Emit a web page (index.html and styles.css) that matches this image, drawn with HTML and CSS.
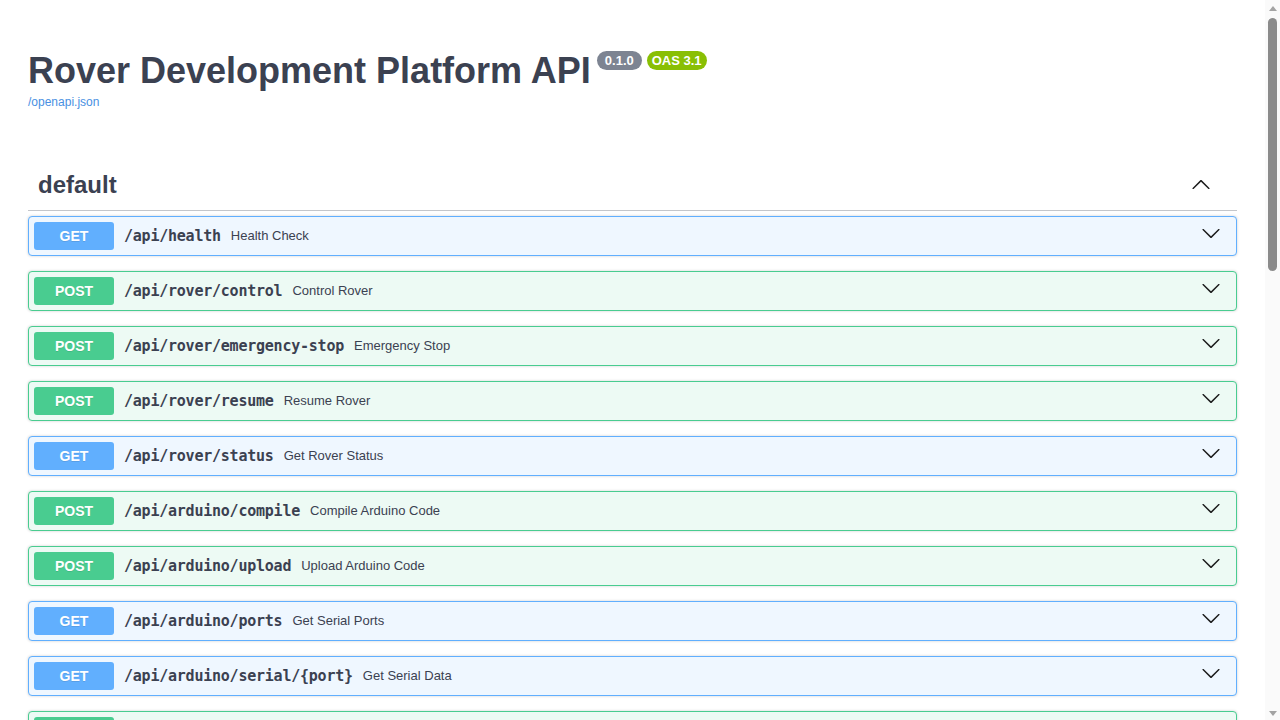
FILE: index.html
```html
<!DOCTYPE html>
<html lang="en">
<head>
<meta charset="utf-8">
<title>Rover Development Platform API - Swagger UI</title>
<link rel="stylesheet" href="styles.css">
</head>
<body>
<div class="page">
  <div class="info">
    <h2 class="title"><span class="title-text">Rover Development Platform API</span><span class="badges"><span class="badge version">0.1.0</span><span class="badge oas">OAS 3.1</span></span></h2>
    <a class="spec-link" href="#">/openapi.json</a>
  </div>

  <section class="tag-section">
    <h3 class="tag">
      <span class="tag-name">default</span>
      <span class="expand"><svg width="20" height="20" viewBox="0 0 20 20"><path transform="rotate(180 10 10)" d="M17.418 6.109c.272-.268.709-.268.979 0s.271.701 0 .969l-7.908 7.83c-.27.268-.707.268-.979 0l-7.908-7.83c-.27-.268-.27-.701 0-.969.271-.268.709-.268.979 0L10 13.25l7.418-7.141z"/></svg></span>
    </h3>

    <div class="opblock get">
      <span class="method">GET</span><span class="path">/api/health</span><span class="desc">Health Check</span>
      <svg class="arrow" width="20" height="20" viewBox="0 0 20 20"><path d="M17.418 6.109c.272-.268.709-.268.979 0s.271.701 0 .969l-7.908 7.83c-.27.268-.707.268-.979 0l-7.908-7.83c-.27-.268-.27-.701 0-.969.271-.268.709-.268.979 0L10 13.25l7.418-7.141z"/></svg>
    </div>
    <div class="opblock post">
      <span class="method">POST</span><span class="path">/api/rover/control</span><span class="desc">Control Rover</span>
      <svg class="arrow" width="20" height="20" viewBox="0 0 20 20"><path d="M17.418 6.109c.272-.268.709-.268.979 0s.271.701 0 .969l-7.908 7.83c-.27.268-.707.268-.979 0l-7.908-7.83c-.27-.268-.27-.701 0-.969.271-.268.709-.268.979 0L10 13.25l7.418-7.141z"/></svg>
    </div>
    <div class="opblock post">
      <span class="method">POST</span><span class="path">/api/rover/emergency-stop</span><span class="desc">Emergency Stop</span>
      <svg class="arrow" width="20" height="20" viewBox="0 0 20 20"><path d="M17.418 6.109c.272-.268.709-.268.979 0s.271.701 0 .969l-7.908 7.83c-.27.268-.707.268-.979 0l-7.908-7.83c-.27-.268-.27-.701 0-.969.271-.268.709-.268.979 0L10 13.25l7.418-7.141z"/></svg>
    </div>
    <div class="opblock post">
      <span class="method">POST</span><span class="path">/api/rover/resume</span><span class="desc">Resume Rover</span>
      <svg class="arrow" width="20" height="20" viewBox="0 0 20 20"><path d="M17.418 6.109c.272-.268.709-.268.979 0s.271.701 0 .969l-7.908 7.83c-.27.268-.707.268-.979 0l-7.908-7.83c-.27-.268-.27-.701 0-.969.271-.268.709-.268.979 0L10 13.25l7.418-7.141z"/></svg>
    </div>
    <div class="opblock get">
      <span class="method">GET</span><span class="path">/api/rover/status</span><span class="desc">Get Rover Status</span>
      <svg class="arrow" width="20" height="20" viewBox="0 0 20 20"><path d="M17.418 6.109c.272-.268.709-.268.979 0s.271.701 0 .969l-7.908 7.83c-.27.268-.707.268-.979 0l-7.908-7.83c-.27-.268-.27-.701 0-.969.271-.268.709-.268.979 0L10 13.25l7.418-7.141z"/></svg>
    </div>
    <div class="opblock post">
      <span class="method">POST</span><span class="path">/api/arduino/compile</span><span class="desc">Compile Arduino Code</span>
      <svg class="arrow" width="20" height="20" viewBox="0 0 20 20"><path d="M17.418 6.109c.272-.268.709-.268.979 0s.271.701 0 .969l-7.908 7.83c-.27.268-.707.268-.979 0l-7.908-7.83c-.27-.268-.27-.701 0-.969.271-.268.709-.268.979 0L10 13.25l7.418-7.141z"/></svg>
    </div>
    <div class="opblock post">
      <span class="method">POST</span><span class="path">/api/arduino/upload</span><span class="desc">Upload Arduino Code</span>
      <svg class="arrow" width="20" height="20" viewBox="0 0 20 20"><path d="M17.418 6.109c.272-.268.709-.268.979 0s.271.701 0 .969l-7.908 7.83c-.27.268-.707.268-.979 0l-7.908-7.83c-.27-.268-.27-.701 0-.969.271-.268.709-.268.979 0L10 13.25l7.418-7.141z"/></svg>
    </div>
    <div class="opblock get">
      <span class="method">GET</span><span class="path">/api/arduino/ports</span><span class="desc">Get Serial Ports</span>
      <svg class="arrow" width="20" height="20" viewBox="0 0 20 20"><path d="M17.418 6.109c.272-.268.709-.268.979 0s.271.701 0 .969l-7.908 7.83c-.27.268-.707.268-.979 0l-7.908-7.83c-.27-.268-.27-.701 0-.969.271-.268.709-.268.979 0L10 13.25l7.418-7.141z"/></svg>
    </div>
    <div class="opblock get">
      <span class="method">GET</span><span class="path">/api/arduino/serial/{port}</span><span class="desc">Get Serial Data</span>
      <svg class="arrow" width="20" height="20" viewBox="0 0 20 20"><path d="M17.418 6.109c.272-.268.709-.268.979 0s.271.701 0 .969l-7.908 7.83c-.27.268-.707.268-.979 0l-7.908-7.83c-.27-.268-.27-.701 0-.969.271-.268.709-.268.979 0L10 13.25l7.418-7.141z"/></svg>
    </div>
    <div class="opblock post">
      <span class="method">POST</span><span class="path">/api/arduino/serial/{port}</span><span class="desc">Send Serial Data</span>
      <svg class="arrow" width="20" height="20" viewBox="0 0 20 20"><path d="M17.418 6.109c.272-.268.709-.268.979 0s.271.701 0 .969l-7.908 7.83c-.27.268-.707.268-.979 0l-7.908-7.83c-.27-.268-.27-.701 0-.969.271-.268.709-.268.979 0L10 13.25l7.418-7.141z"/></svg>
    </div>
  </section>
</div>
<div class="scrollbar">
  <span class="sb-up"></span>
  <span class="sb-thumb"></span>
  <span class="sb-down"></span>
</div>
</body>
</html>
```
FILE: styles.css
```css
* { box-sizing: border-box; }

html, body {
  margin: 0;
  height: 720px;
  overflow: hidden;
  background: #fff;
}

body {
  display: flex;
  font-family: "Liberation Sans", Arial, sans-serif;
  color: #3b4151;
}

.page {
  flex: 1;
  min-width: 0;
  padding: 50px 28px 0;
}

/* Info header */
.info {
  margin-bottom: 53px;
}

.title {
  margin: 0;
  display: flex;
  align-items: flex-start;
  font-size: 36px;
  line-height: 41px;
  font-weight: bold;
  color: #3b4151;
}

.badges {
  display: flex;
  gap: 5px;
  margin-left: 6px;
  margin-top: 1px;
}

.badge {
  font-size: 13px;
  line-height: 15px;
  font-weight: bold;
  color: #fff;
  border-radius: 57px;
  padding: 2px 8px;
}

.badge.version { background: #7d8492; }
.badge.oas { background: #89bf04; padding: 2px 5px; }

.spec-link {
  display: block;
  margin-top: 4px;
  font-size: 12px;
  line-height: 14px;
  color: #4990e2;
  text-decoration: none;
}

/* Tag header */
.tag {
  margin: 0 0 5px;
  display: flex;
  align-items: center;
  padding: 9px 20px 11px 10px;
  font-size: 24px;
  line-height: 28px;
  font-weight: bold;
  border-bottom: 1px solid rgba(59, 65, 81, 0.3);
}

.tag-name { flex: 1; }

.expand {
  display: flex;
  margin-right: 6px;
  margin-bottom: 1px;
}

.expand svg, .arrow { fill: #1b1b1b; }

/* Operation blocks */
.opblock {
  display: flex;
  align-items: center;
  padding: 5px;
  margin-bottom: 15px;
  border: 1px solid;
  border-radius: 4px;
  box-shadow: 0 0 3px rgba(0, 0, 0, 0.19);
}

.opblock.get { border-color: #61affe; background: #eff7ff; }
.opblock.post { border-color: #49cc90; background: #edfaf4; }

.method {
  min-width: 80px;
  padding: 6px 0;
  text-align: center;
  font-size: 14px;
  line-height: 16px;
  font-weight: bold;
  color: #fff;
  border-radius: 3px;
  text-shadow: 0 1px 0 rgba(0, 0, 0, 0.1);
}

.get .method { background: #61affe; }
.post .method { background: #49cc90; }

.path {
  padding: 0 10px;
  font-family: "DejaVu Sans Mono", "Liberation Mono", monospace;
  font-size: 15px;
  letter-spacing: -0.23px;
  font-weight: bold;
  color: #3b4151;
}

.desc {
  flex: 1;
  font-size: 13px;
  color: #3b4151;
  margin-bottom: 2px;
}

.arrow {
  margin-right: 10px;
  margin-bottom: 6px;
  flex-shrink: 0;
}

/* Scrollbar */
.scrollbar {
  width: 15px;
  flex-shrink: 0;
  height: 720px;
  background: #fafafa;
  display: flex;
  flex-direction: column;
  align-items: center;
}

.sb-up {
  margin-top: 6px;
  width: 0;
  height: 0;
  border-left: 4.5px solid transparent;
  border-right: 4.5px solid transparent;
  border-bottom: 5px solid #a3a3a3;
}

.sb-thumb {
  margin-top: 7px;
  width: 9px;
  height: 253px;
  border-radius: 5px;
  background: #8b8b8b;
}

.sb-down {
  margin-top: auto;
  margin-bottom: 4px;
  width: 0;
  height: 0;
  border-left: 4.5px solid transparent;
  border-right: 4.5px solid transparent;
  border-top: 5px solid #a3a3a3;
}
```
